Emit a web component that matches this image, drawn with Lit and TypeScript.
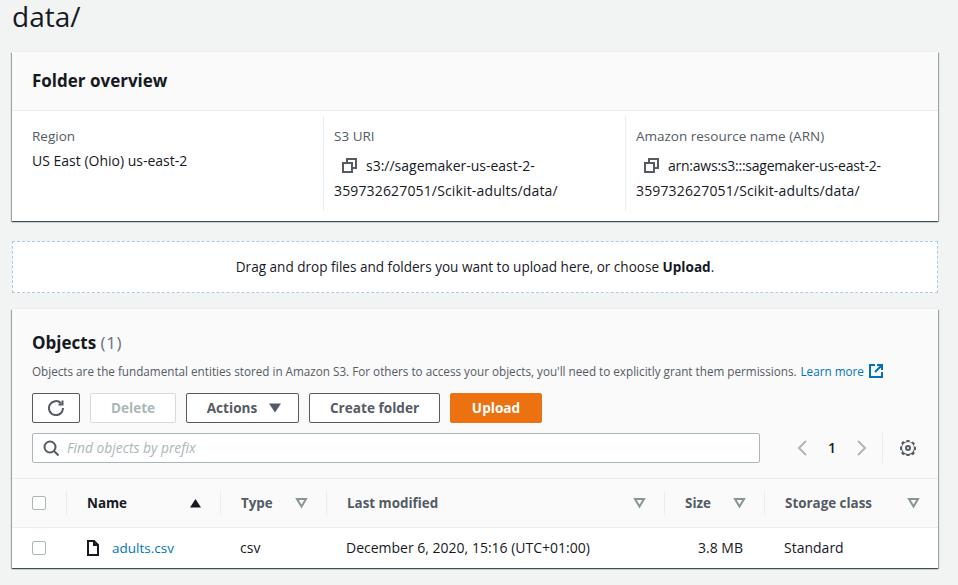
import { LitElement, html, css, svg } from 'lit';
import { customElement } from 'lit/decorators.js';

const copyIcon = html`<svg class="copy" width="15" height="15" viewBox="0 0 15 15" fill="none" stroke="#545b64" stroke-width="2">
  <rect x="1" y="5" width="9" height="9"></rect>
  <path d="M5 5V1h9v9h-4"></path>
</svg>`;

const caretOutline = svg`<path d="M2 2h9L6.5 9.5z" fill="none" stroke="#879596" stroke-width="2"></path>`;
const caretSolid = svg`<path d="M1 10.5 6.5 2 12 10.5z" fill="#16191f"></path>`;

const columns = [
  { name: 'Name', active: true },
  { name: 'Type' },
  { name: 'Last modified' },
  { name: 'Size' },
  { name: 'Storage class' },
];

@customElement('app-root')
export class AppRoot extends LitElement {
  static styles = css`
    :host {
      display: block;
      height: 585px;
      overflow: hidden;
      background: #f2f3f3;
      color: #16191f;
      font-family: "Open Sans", sans-serif;
      font-size: 14px;
      line-height: 20px;
    }
    .page {
      padding: 0 20px 0 12px;
    }
    h1 {
      margin: 0;
      height: 52px;
      font-size: 28px;
      line-height: 32px;
      font-weight: 400;
    }
    .card {
      background: #fff;
      box-shadow: 0 1px 1px 0 rgba(0, 28, 36, 0.5), 1px 1px 1px 0 rgba(0, 28, 36, 0.3), -1px 1px 1px 0 rgba(0, 28, 36, 0.3), 0 -1px 0 0 #eaeded;
    }
    .overview-head {
      height: 58px;
      padding-left: 20px;
      display: flex;
      align-items: center;
      background: #fafafa;
      border-bottom: 1px solid #eaeded;
      font-size: 17px;
      font-weight: 700;
    }
    .overview-body {
      display: grid;
      grid-template-columns: 311px 302px 1fr;
      height: 110px;
      padding-top: 5px;
      box-sizing: border-box;
    }
    .col {
      height: 95px;
      padding: 10px 10px 0 20px;
      box-sizing: border-box;
    }
    .col + .col {
      padding-left: 10px;
      border-left: 1px solid #eaeded;
    }
    .label {
      color: #545b64;
      height: 25px;
      font-size: 13.5px;
    }
    .value {
      margin-top: 2px;
      line-height: 25px;
      white-space: nowrap;
    }
    .region {
      line-height: 20px;
    }
    .copy {
      margin: 0 9px 0 8px;
      vertical-align: -2px;
    }
    .arn {
      letter-spacing: -0.24px;
    }
    .account {
      letter-spacing: 0.15px;
    }
    .drop {
      margin-top: 20px;
      height: 52px;
      box-sizing: border-box;
      border: 1px dashed #a0d0e6;
      background: #fff;
      display: flex;
      align-items: center;
      justify-content: center;
      font-size: 13.55px;
    }
    .objects {
      margin-top: 16px;
      height: 259px;
    }
    .objects-head {
      height: 170px;
      box-sizing: border-box;
      padding: 22px 20px 0;
      background: #fafafa;
      border-bottom: 1px solid #eaeded;
    }
    h2 {
      margin: 0;
      font-size: 17px;
      line-height: 24px;
      font-weight: 700;
    }
    h2 span {
      font-weight: 400;
      color: #687078;
      letter-spacing: 0.6px;
    }
    .desc {
      margin-top: 7px;
      font-size: 11.7px;
      line-height: 18px;
      color: #545b64;
      display: flex;
      align-items: center;
      white-space: nowrap;
    }
    .desc a {
      color: #0073bb;
      margin-left: 4px;
    }
    .desc svg {
      margin-left: 5px;
    }
    .toolbar {
      display: flex;
      gap: 10px;
      margin-top: 13px;
    }
    .btn {
      height: 30px;
      box-sizing: border-box;
      border: 1px solid #545b64;
      border-radius: 2px;
      background: #fff;
      color: #545b64;
      font: 700 13.6px/20px "Open Sans", sans-serif;
      display: flex;
      align-items: center;
      justify-content: center;
      padding: 0;
    }
    .refresh { width: 48px; }
    .delete { width: 86px; color: #aab7b8; border-color: #d5dbdb; }
    .actions { width: 113px; gap: 11px; padding-left: 4px; }
    .create { width: 131px; }
    .upload { width: 92px; background: #ec7211; border-color: #ec7211; color: #fff; }
    .search-row {
      display: flex;
      align-items: center;
      margin-top: 10px;
    }
    .search {
      width: 728px;
      height: 30px;
      box-sizing: border-box;
      border: 1px solid #aab7b8;
      border-radius: 2px;
      background: #fff;
      display: flex;
      align-items: center;
      padding-left: 10px;
      gap: 8px;
      color: #aab7b8;
      font-style: italic;
      font-size: 13.8px;
    }
    .pager {
      display: flex;
      align-items: center;
      height: 30px;
      margin-left: 37px;
    }
    .page-no {
      width: 50px;
      text-align: center;
      font-weight: 600;
    }
    .settings {
      height: 30px;
      margin-left: 15px;
      padding-left: 17px;
      border-left: 1px solid #eaeded;
      display: flex;
      align-items: center;
    }
    .grid {
      display: grid;
      grid-template-columns: 54px 154px 106px 338px 100px 1fr;
    }
    .thead {
      height: 49px;
      background: #fafafa;
      border-bottom: 1px solid #eaeded;
      align-items: center;
      box-sizing: border-box;
    }
    .th {
      height: 24px;
      border-left: 1px solid #eaeded;
      display: flex;
      align-items: center;
      justify-content: space-between;
      padding: 0 18px 0 20px;
      font-weight: 700;
      font-size: 13.4px;
      color: #545b64;
    }
    .th.active {
      color: #16191f;
    }
    .check {
      width: 14px;
      height: 14px;
      box-sizing: border-box;
      border: 1px solid #aab7b8;
      border-radius: 2px;
      background: #fff;
      margin-left: 20px;
    }
    .tbody {
      height: 40px;
      align-items: center;
    }
    .name {
      display: flex;
      align-items: center;
      gap: 13px;
      padding-left: 21px;
      color: #0073bb;
      font-size: 13.5px;
    }
    .cell { padding-left: 20px; }
    .size { text-align: right; padding-right: 21px; }
  `;

  render() {
    return html`
      <div class="page">
        <h1>data/</h1>
        <section class="card">
          <div class="overview-head">Folder overview</div>
          <div class="overview-body">
            <div class="col">
              <div class="label">Region</div>
              <div class="region">US East (Ohio) us-east-2</div>
            </div>
            <div class="col">
              <div class="label">S3 URI</div>
              <div class="value">${copyIcon}s3://sagemaker-us-east-2-<br /><span class="account">359732627051/Scikit-adults/data/</span></div>
            </div>
            <div class="col">
              <div class="label">Amazon resource name (ARN)</div>
              <div class="value">${copyIcon}<span class="arn">arn:aws:s3:::sagemaker-us-east-2-</span><br /><span class="account">359732627051/Scikit-adults/data/</span></div>
            </div>
          </div>
        </section>
        <div class="drop"><span>Drag and drop files and folders you want to upload here, or choose <b>Upload</b>.</span></div>
        <section class="card objects">
          <div class="objects-head">
            <h2>Objects <span>(1)</span></h2>
            <div class="desc">
              Objects are the fundamental entities stored in Amazon S3. For others to access your objects, you'll need to explicitly grant them permissions.
              <a>Learn more</a>
              <svg width="14" height="14" viewBox="0 0 14 14" fill="none" stroke="#0073bb" stroke-width="2">
                <path d="M6 1H1v12h12V8M8 1h5v5M13 1 6 8"></path>
              </svg>
            </div>
            <div class="toolbar">
              <button class="btn refresh">
                <svg width="16" height="16" viewBox="0 0 16 16" fill="none" stroke="#545b64" stroke-width="2">
                  <path d="M13 3.2A7 7 0 1 0 15 8"></path>
                  <path d="M14.5 0.5V4.5H10.5"></path>
                </svg>
              </button>
              <button class="btn delete">Delete</button>
              <button class="btn actions">
                Actions
                <svg width="14" height="10" viewBox="0 0 14 10"><path d="M1 .5h12L7 9.5z" fill="#545b64"></path></svg>
              </button>
              <button class="btn create">Create folder</button>
              <button class="btn upload">Upload</button>
            </div>
            <div class="search-row">
              <div class="search">
                <svg width="16" height="16" viewBox="0 0 16 16" fill="none" stroke="#545b64" stroke-width="2">
                  <circle cx="7" cy="7" r="5.5"></circle>
                  <path d="M11 11l4.5 4.5"></path>
                </svg>
                Find objects by prefix
              </div>
              <div class="pager">
                <svg width="10" height="16" viewBox="0 0 10 16" fill="none" stroke="#aab7b8" stroke-width="2"><path d="M9 1 2 8l7 7"></path></svg>
                <span class="page-no">1</span>
                <svg width="10" height="16" viewBox="0 0 10 16" fill="none" stroke="#aab7b8" stroke-width="2"><path d="M1 1l7 7-7 7"></path></svg>
              </div>
              <div class="settings">
                <svg width="16" height="16" viewBox="0 0 16 16" fill="#545b64" fill-rule="evenodd">
                  <path d="M6.6 0h2.8l.4 2 1.3.6 1.8-1.1 2 2-1.1 1.8.6 1.3 2 .4v2.8l-2 .4-.6 1.3 1.1 1.8-2 2-1.8-1.1-1.3.6-.4 2H6.6l-.4-2-1.3-.6-1.8 1.1-2-2 1.1-1.8-.6-1.3-2-.4V6.6l2-.4.6-1.3-1.1-1.8 2-2 1.8 1.1 1.3-.6zM8 2a6 6 0 1 0 0 12A6 6 0 0 0 8 2zm0 3a3 3 0 1 1 0 6 3 3 0 0 1 0-6zm0 2a1 1 0 1 0 0 2 1 1 0 0 0 0-2z"></path>
                </svg>
              </div>
            </div>
          </div>
          <div class="grid thead">
            <div class="check"></div>
            ${columns.map(c => html`
              <div class="th ${c.active ? 'active' : ''}">
                ${c.name}
                <svg width="13" height="12" viewBox="0 0 13 12">${c.active ? caretSolid : caretOutline}</svg>
              </div>`)}
          </div>
          <div class="grid tbody">
            <div class="check"></div>
            <div class="name">
              <svg width="12" height="16" viewBox="0 0 12 16" fill="none" stroke="#16191f" stroke-width="2">
                <path d="M1 1h6l4 4v10H1z"></path>
                <path d="M7 1v4h4"></path>
              </svg>
              adults.csv
            </div>
            <div class="cell">csv</div>
            <div class="cell">December 6, 2020, 15:16 (UTC+01:00)</div>
            <div class="size">3.8 MB</div>
            <div class="cell">Standard</div>
          </div>
        </section>
      </div>
    `;
  }
}
